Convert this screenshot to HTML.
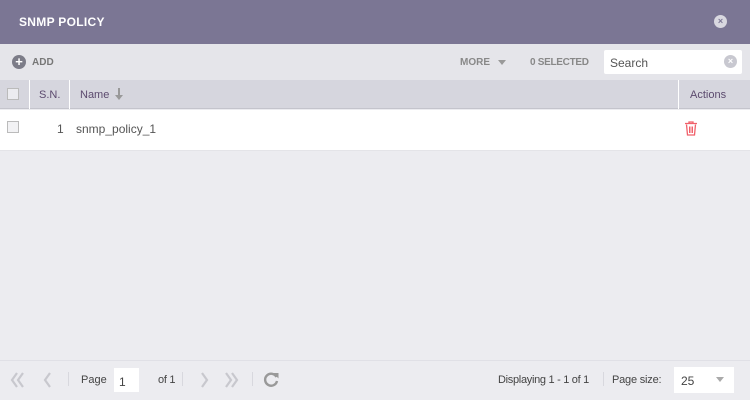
<!DOCTYPE html>
<html><head><style>
*{margin:0;padding:0;box-sizing:border-box}
body{width:750px;height:400px;overflow:hidden;background:#ececf0;font-family:"Liberation Sans",sans-serif;position:relative}
.a{position:absolute}
</style></head><body>
<div class="a" style="left:0;top:0;width:750px;height:44px;background:#7b7694"></div>
<div class="a" style="left:19px;top:15px;color:#fff;font-size:12px;font-weight:bold;letter-spacing:0.3px">SNMP POLICY</div>
<div class="a" style="left:714px;top:15px;width:13px;height:13px;border-radius:50%;background:#d9d8e0;color:#7b7694;font-size:9px;line-height:13px;text-align:center;font-weight:bold">×</div>
<div class="a" style="left:0;top:44px;width:750px;height:36px;background:#e5e5ea"></div>
<div class="a" style="left:12px;top:55px;width:14px;height:14px;border-radius:50%;background:#7c7c88;color:#fff;font-size:13px;line-height:14px;text-align:center;font-weight:bold">+</div>
<div class="a" style="left:32px;top:57px;color:#777;font-size:10px;font-weight:bold">ADD</div>
<div class="a" style="left:460px;top:57px;color:#888;font-size:10px;font-weight:bold">MORE</div>
<div class="a" style="left:498px;top:60px;border-left:4px solid transparent;border-right:4px solid transparent;border-top:5px solid #999"></div>
<div class="a" style="left:530px;top:57px;color:#888;font-size:10px;font-weight:bold;letter-spacing:-0.3px">0 SELECTED</div>
<div class="a" style="left:604px;top:50px;width:138px;height:24px;background:#fff;border-radius:2px"></div>
<div class="a" style="left:610px;top:56px;color:#555;font-size:12px">Search</div>
<div class="a" style="left:724px;top:55px;width:13px;height:13px;border-radius:50%;background:#c8c8d0;color:#fff;font-size:9px;line-height:13px;text-align:center;font-weight:bold">×</div>
<div class="a" style="left:0;top:80px;width:750px;height:29px;background:#d6d6de;border-bottom:1px solid #c4c4cc"></div>
<div class="a" style="left:29px;top:80px;width:1px;height:29px;background:#fff"></div>
<div class="a" style="left:69px;top:80px;width:1px;height:29px;background:#fff"></div>
<div class="a" style="left:678px;top:80px;width:1px;height:29px;background:#fff"></div>
<div class="a" style="left:7px;top:88px;width:12px;height:12px;border:1px solid #bbb;background:#ececf0"></div>
<div class="a" style="left:39px;top:89px;color:#5c4a6e;font-size:11px">S.N.</div>
<div class="a" style="left:80px;top:89px;color:#5c4a6e;font-size:11px">Name</div>
<svg class="a" style="left:114px;top:88px" width="10" height="13" viewBox="0 0 10 13"><path d="M5 0v9" stroke="#999" stroke-width="2"/><path d="M1 7l4 5 4-5z" fill="#999"/></svg>
<div class="a" style="left:690px;top:89px;color:#5c4a6e;font-size:11px">Actions</div>
<div class="a" style="left:0;top:110px;width:750px;height:41px;background:#fff;border-bottom:1px solid #e4e4e8"></div>
<div class="a" style="left:7px;top:121px;width:12px;height:12px;border:1px solid #bbb;background:#f2f2f4"></div>
<div class="a" style="left:57px;top:122px;color:#555;font-size:12px">1</div>
<div class="a" style="left:76px;top:122px;color:#555;font-size:12px">snmp_policy_1</div>
<svg class="a" style="left:684px;top:121px" width="14" height="15" viewBox="0 0 14 15"><path d="M1 2.5h12M5 2.5V1h4v1.5M2.5 3.5l1 10.5h7l1-10.5" fill="none" stroke="#f0606a" stroke-width="1.3"/><path d="M5.5 5.5v6.5M7 5.5v6.5M8.5 5.5v6.5" stroke="#f0606a" stroke-width="1"/></svg>
<div class="a" style="left:0;top:360px;width:750px;height:1px;background:#e0e0e6"></div>
<svg class="a" style="left:10px;top:372px" width="250" height="16" viewBox="0 0 250 16" fill="none" stroke="#c8c8ce" stroke-width="2.2">
<path d="M7 1L2 8l5 7M13 1L8 8l5 7"/>
<path d="M40 1l-5 7 5 7"/>
<path d="M192 1l5 7-5 7"/>
<path d="M216 1l5 7-5 7M222 1l5 7-5 7"/>
</svg>
<div class="a" style="left:68px;top:372px;width:1px;height:14px;background:#d8d8de"></div>
<div class="a" style="left:81px;top:374px;color:#444;font-size:11px">Page</div>
<div class="a" style="left:114px;top:368px;width:25px;height:24px;background:#fff"></div>
<div class="a" style="left:119px;top:375px;color:#444;font-size:12px">1</div>
<div class="a" style="left:158px;top:374px;color:#444;font-size:11px;letter-spacing:-0.3px">of 1</div>
<div class="a" style="left:182px;top:372px;width:1px;height:14px;background:#d8d8de"></div>
<div class="a" style="left:252px;top:372px;width:1px;height:14px;background:#d8d8de"></div>
<svg class="a" style="left:263px;top:371px" width="17" height="17" viewBox="0 0 17 17"><path d="M13.5 6A6 6 0 1 0 14 10" fill="none" stroke="#999" stroke-width="2.4"/><path d="M10 2l5.5 0 0 5.5z" fill="#999"/></svg>
<div class="a" style="left:498px;top:374px;color:#444;font-size:11px;letter-spacing:-0.3px">Displaying 1 - 1 of 1</div>
<div class="a" style="left:603px;top:372px;width:1px;height:14px;background:#d8d8de"></div>
<div class="a" style="left:612px;top:374px;color:#444;font-size:11px;letter-spacing:-0.2px">Page size:</div>
<div class="a" style="left:674px;top:367px;width:60px;height:26px;background:#fff"></div>
<div class="a" style="left:681px;top:374px;color:#444;font-size:12px">25</div>
<div class="a" style="left:716px;top:377px;border-left:4px solid transparent;border-right:4px solid transparent;border-top:5px solid #aaa"></div>
</body></html>
